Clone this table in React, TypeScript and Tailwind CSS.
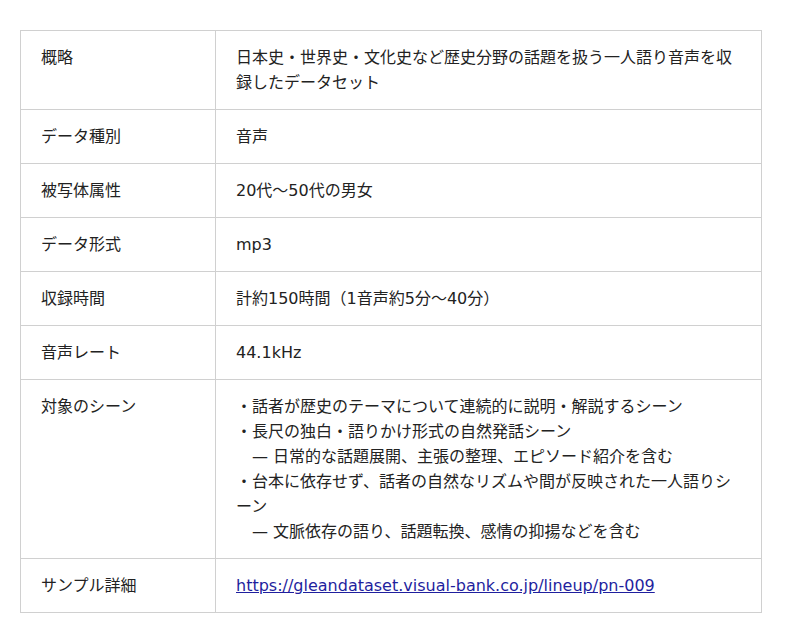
const rows: { label: string; value: React.ReactNode }[] = [
  {
    label: "概略",
    value: "日本史・世界史・文化史など歴史分野の話題を扱う一人語り音声を収録したデータセット",
  },
  { label: "データ種別", value: "音声" },
  { label: "被写体属性", value: "20代〜50代の男女" },
  { label: "データ形式", value: "mp3" },
  { label: "収録時間", value: "計約150時間（1音声約5分〜40分）" },
  { label: "音声レート", value: "44.1kHz" },
  {
    label: "対象のシーン",
    value: (
      <>
        ・話者が歴史のテーマについて連続的に説明・解説するシーン
        <br />
        ・長尺の独白・語りかけ形式の自然発話シーン
        <br />
        {"\u3000— 日常的な話題展開、主張の整理、エピソード紹介を含む"}
        <br />
        ・台本に依存せず、話者の自然なリズムや間が反映された一人語りシーン
        <br />
        {"\u3000— 文脈依存の語り、話題転換、感情の抑揚などを含む"}
      </>
    ),
  },
  {
    label: "サンプル詳細",
    value: (
      <a href="#" className="text-[#1f1f9e] underline">
        https://gleandataset.visual-bank.co.jp/lineup/pn-009
      </a>
    ),
  },
];

export default function App() {
  return (
    <div
      className="min-h-[643px] bg-white px-5 pt-[30px] text-[16px] leading-[25px] text-[#222]"
      style={{ fontFamily: '"DejaVu Sans", "Noto Sans CJK JP", sans-serif' }}
    >
      <table className="w-[742px] border-collapse">
        <tbody>
          {rows.map((r) => (
            <tr key={r.label}>
              <td className="w-[195px] border border-[#d0d0d0] px-5 py-[14px] align-top">
                {r.label}
              </td>
              <td className="border border-[#d0d0d0] px-5 py-[14px] align-top">{r.value}</td>
            </tr>
          ))}
        </tbody>
      </table>
    </div>
  );
}
